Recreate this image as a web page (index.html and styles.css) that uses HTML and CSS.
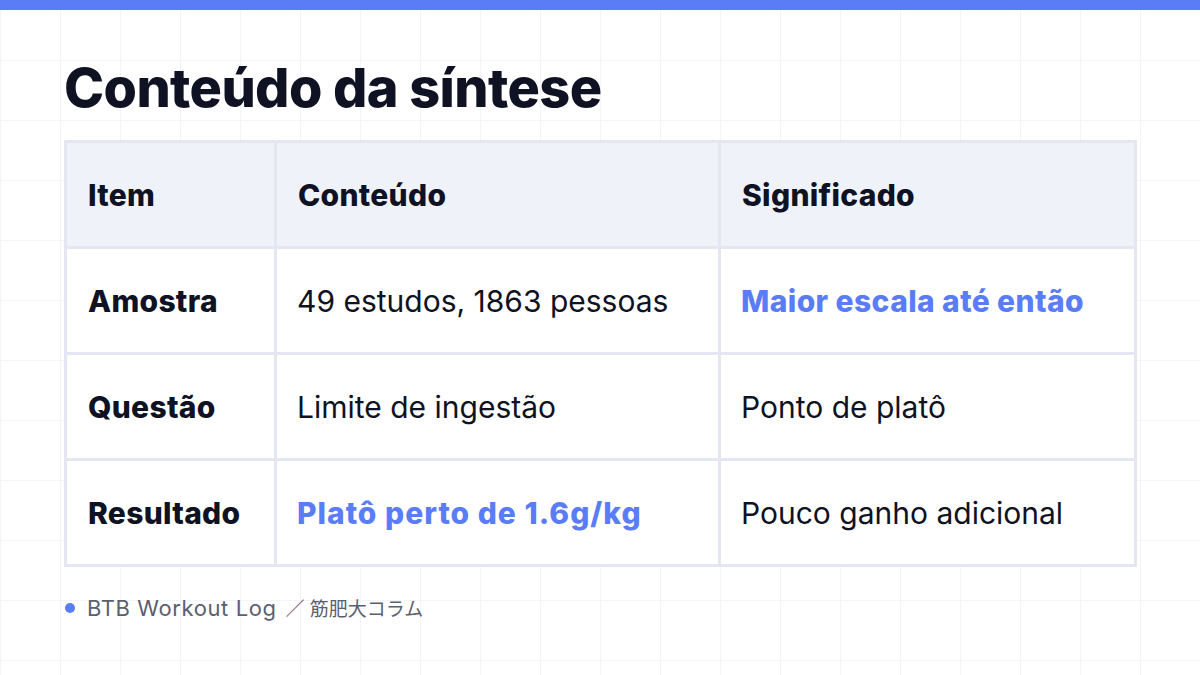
FILE: index.html
```html
<!DOCTYPE html>
<html lang="pt">
<head>
  <meta charset="UTF-8" />
  <meta name="viewport" content="width=device-width, initial-scale=1.0" />
  <title>Conteúdo da síntese</title>
  <link rel="stylesheet" href="styles.css">
</head>
<body>
  <div class="topbar"></div>
  <main class="slide">
    <h1>Conteúdo da síntese</h1>
    <table class="grid-table">
      <colgroup>
        <col class="c1"><col class="c2"><col class="c3">
      </colgroup>
      <thead>
        <tr><th>Item</th><th>Conteúdo</th><th>Significado</th></tr>
      </thead>
      <tbody>
        <tr><th>Amostra</th><td>49 estudos, 1863 pessoas</td><td class="hl">Maior escala até então</td></tr>
        <tr><th>Questão</th><td>Limite de ingestão</td><td>Ponto de platô</td></tr>
        <tr><th>Resultado</th><td class="hl wide">Platô perto de 1.6g/kg</td><td>Pouco ganho adicional</td></tr>
      </tbody>
    </table>
    <p class="source"><span class="dot"></span><span>BTB Workout Log <span class="ja">／ 筋肥大コラム</span></span></p>
  </main>
</body>
</html>
```

FILE: styles.css
```css
*{box-sizing:border-box;margin:0;padding:0}
html,body{height:100%}
body{
  font-family:Inter,"Noto Sans","Noto Sans CJK JP",sans-serif;
  color:#0f1222;
  background-color:#fff;
  background-image:
    linear-gradient(to right,#f3f4f8 1px,transparent 1px),
    linear-gradient(to bottom,#f3f4f8 1px,transparent 1px);
  background-size:60px 60px;
  background-position:0 0;
  overflow:hidden;
}
.topbar{height:10px;background:#5b7cf7}
.slide{padding:48px 64px 0}
h1{font-size:54px;font-weight:800;letter-spacing:-.6px;line-height:60px;margin-bottom:22px}
.grid-table{width:1070px;border-collapse:collapse;table-layout:fixed;background:#fff}
.c1{width:210px}.c2{width:444px}.c3{width:416px}
.grid-table th,.grid-table td{
  height:106px;border:3px solid #e4e6f1;padding:0 0 0 20px;
  text-align:left;vertical-align:middle;font-size:30px;line-height:36px;
}
.grid-table th{font-weight:800;letter-spacing:.3px;padding-left:21px}
.grid-table td{font-weight:400}
.grid-table thead th{background:#f0f2fa}
.grid-table .hl{color:#5b7cf7;font-weight:800;letter-spacing:.4px}
.grid-table .wide{letter-spacing:1px}
.source{display:flex;align-items:center;gap:12px;margin-top:27px;padding-left:1px;font-size:22px;letter-spacing:.6px;color:#5b6070}
.ja{font-size:19px;letter-spacing:0;margin-left:2px}
.dot{width:10px;height:10px;border-radius:50%;background:#5b7cf7}
```
